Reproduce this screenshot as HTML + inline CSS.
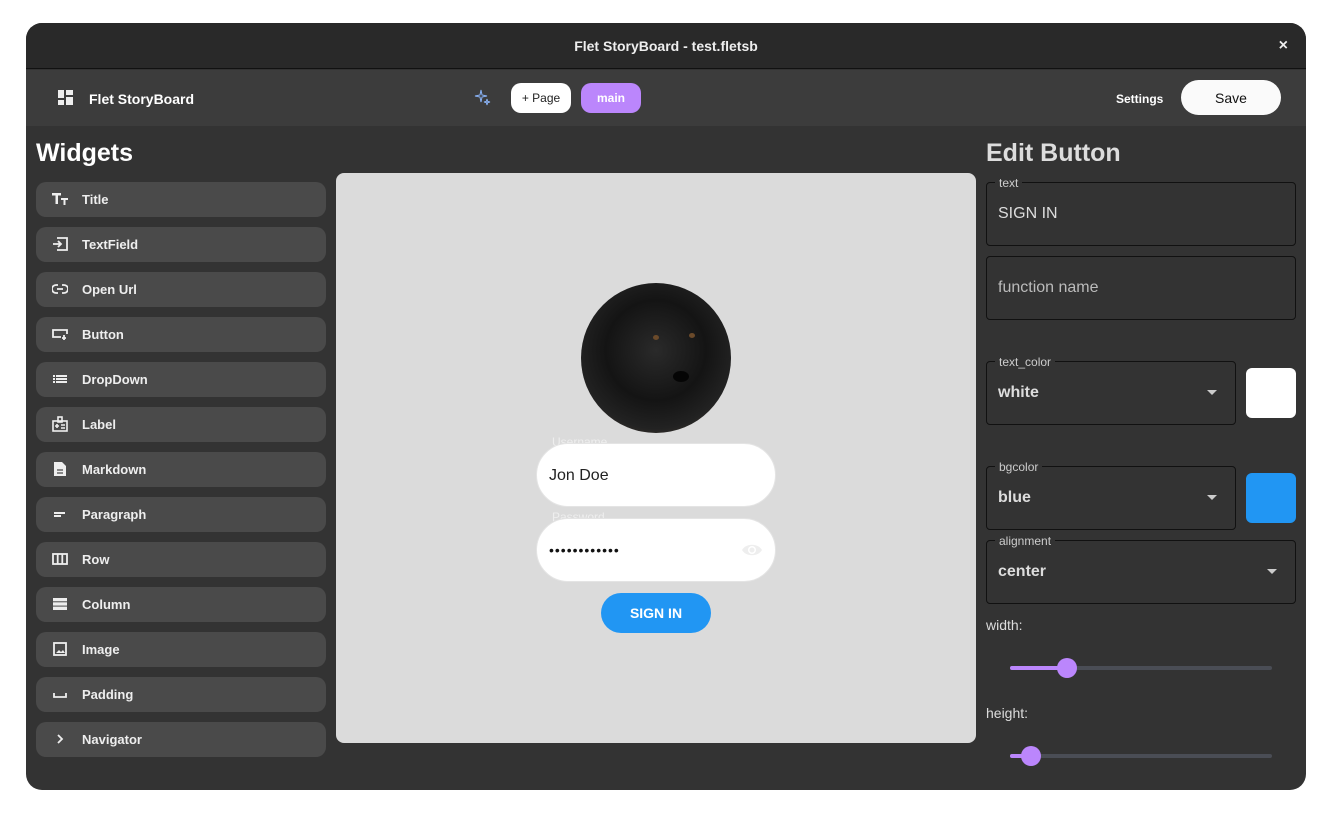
<!DOCTYPE html>
<html><head><style>
*{box-sizing:border-box;margin:0;padding:0}
body{width:1332px;height:819px;background:#fff;font-family:"Liberation Sans",sans-serif;position:relative;overflow:hidden}
.win{position:absolute;left:26px;top:23px;width:1280px;height:767px;background:#333;border-radius:16px;overflow:hidden}
.tb{position:absolute;left:0;top:0;width:100%;height:46px;background:#292929;border-bottom:1px solid #111;color:#eee;font-weight:bold;font-size:14px;text-align:center;line-height:46px}
.tool{position:absolute;left:0;top:47px;width:100%;height:56px;background:#3c3c3c}
.abs{position:absolute}
.item{position:absolute;left:10px;width:290px;height:35px;background:#4a4a4a;border-radius:10px;color:#eee;font-size:13px;font-weight:bold;line-height:35px;padding-left:46px}
.item svg{position:absolute;left:16px;top:10px}
.fld{position:absolute;left:960px;width:310px;border:1px solid #111;border-radius:4px;color:#ddd}
.lbl{position:absolute;top:-7px;left:8px;background:#333;padding:0 4px;font-size:12px;color:#ccc;line-height:14px}
.val{position:absolute;left:11px;font-size:16px}
.arr{position:absolute;width:0;height:0;border-left:5px solid transparent;border-right:5px solid transparent;border-top:5px solid #ccc}
</style></head><body>
<div class="win">
<div class="tb">Flet StoryBoard - test.fletsb<span style="position:absolute;right:18px;top:0;font-size:16px">×</span></div>
<div class="tool">
 <svg class="abs" style="left:32px;top:20px" width="15" height="15" viewBox="0 0 15 15" fill="#eee"><rect x="0" y="0" width="6" height="8"/><rect x="0" y="10" width="6" height="5"/><rect x="8" y="0" width="7" height="5"/><rect x="8" y="7" width="7" height="8"/></svg>
 <div class="abs" style="left:63px;top:21px;color:#fff;font-weight:bold;font-size:14px">Flet StoryBoard</div>
 <svg class="abs" style="left:448px;top:19px" width="18" height="18" viewBox="0 0 18 18" fill="none" stroke="#8ab4f8" stroke-width="1"><path d="M7 1 L8 6 L13 7 L8 8 L7 13 L6 8 L1 7 L6 6Z"/><path d="M13 10 L13.6 12.4 L16 13 L13.6 13.6 L13 16 L12.4 13.6 L10 13 L12.4 12.4Z"/></svg>
 <div class="abs" style="left:485px;top:13px;width:60px;height:30px;background:#fff;border-radius:10px;font-size:12px;color:#222;text-align:center;line-height:31px">+ Page</div>
 <div class="abs" style="left:555px;top:13px;width:60px;height:30px;background:#bb86fc;border-radius:10px;font-size:12px;color:#fff;font-weight:bold;text-align:center;line-height:31px">main</div>
 <div class="abs" style="left:1090px;top:22px;color:#fff;font-weight:bold;font-size:12px">Settings</div>
 <div class="abs" style="left:1155px;top:10px;width:100px;height:35px;background:#fafafa;border-radius:18px;font-size:14px;color:#111;text-align:center;line-height:36px">Save</div>
</div>
<div class="abs" style="left:10px;top:116px;color:#fff;font-weight:bold;font-size:25px">Widgets</div>
<div class="item" style="top:159px"><svg width="16" height="14" viewBox="0 0 16 14" fill="#eee"><path d="M0 1h9v2.5H6V12H3.5V3.5H0z M9 6h7v2h-2.5v5H11.5V8H9z"/></svg>Title</div>
<div class="item" style="top:204px"><svg width="16" height="14" viewBox="0 0 16 14" fill="none" stroke="#eee" stroke-width="1.8"><path d="M5 1H15V13H5M1 7h8M6 4l3 3-3 3"/></svg>TextField</div>
<div class="item" style="top:249px"><svg width="16" height="14" viewBox="0 0 16 14" fill="none" stroke="#eee" stroke-width="1.8"><path d="M6 3H4a4 4 0 000 8h2M10 3h2a4 4 0 010 8h-2M5 7h6"/></svg>Open Url</div>
<div class="item" style="top:294px"><svg width="16" height="14" viewBox="0 0 16 14" fill="none" stroke="#eee" stroke-width="1.8"><path d="M9 10H1V3h14v4M12 8v5M10 11h4"/></svg>Button</div>
<div class="item" style="top:339px"><svg width="16" height="14" viewBox="0 0 16 14" fill="#eee"><rect x="1" y="3" width="2" height="2"/><rect x="1" y="6" width="2" height="2"/><rect x="1" y="9" width="2" height="2"/><rect x="4" y="3" width="11" height="2"/><rect x="4" y="6" width="11" height="2"/><rect x="4" y="9" width="11" height="2"/></svg>DropDown</div>
<div class="item" style="top:384px"><svg width="16" height="16" viewBox="0 0 16 16" fill="none" stroke="#eee" stroke-width="1.6" style="top:9px"><rect x="1" y="5" width="14" height="10"/><rect x="6" y="1" width="4" height="5"/><path d="M3 10h4M5 8v4M9 9h4M9 12h4"/></svg>Label</div>
<div class="item" style="top:429px"><svg width="16" height="16" viewBox="0 0 16 16" fill="#eee" style="top:9px"><path d="M2 1h8l4 4v10H2z"/><path d="M5 9h6M5 12h6" stroke="#4a4a4a" stroke-width="1.3"/></svg>Markdown</div>
<div class="item" style="top:474px"><svg width="16" height="14" viewBox="0 0 16 14" fill="#eee"><rect x="2" y="5" width="11" height="2"/><rect x="2" y="8" width="7" height="2"/></svg>Paragraph</div>
<div class="item" style="top:519px"><svg width="16" height="14" viewBox="0 0 16 14" fill="none" stroke="#eee" stroke-width="1.8"><rect x="1" y="2" width="14" height="10"/><path d="M5.7 2v10M10.3 2v10"/></svg>Row</div>
<div class="item" style="top:564px"><svg width="16" height="14" viewBox="0 0 16 14" fill="#eee"><rect x="1" y="1" width="14" height="3.3"/><rect x="1" y="5.3" width="14" height="3.3"/><rect x="1" y="9.6" width="14" height="3.4"/></svg>Column</div>
<div class="item" style="top:609px"><svg width="16" height="14" viewBox="0 0 16 14" fill="none" stroke="#eee" stroke-width="1.8"><rect x="2" y="1" width="12" height="12"/><path d="M4 11l3-3 2 2 2-2 2 3z" fill="#eee" stroke="none"/></svg>Image</div>
<div class="item" style="top:654px"><svg width="16" height="14" viewBox="0 0 16 14" fill="none" stroke="#eee" stroke-width="1.8"><path d="M2 6v4h12V6"/></svg>Padding</div>
<div class="item" style="top:699px"><svg width="16" height="14" viewBox="0 0 16 14" fill="none" stroke="#eee" stroke-width="1.8"><path d="M6 3l4 4-4 4"/></svg>Navigator</div>

<div class="abs" style="left:310px;top:150px;width:640px;height:570px;background:#dbdbdb;border-radius:8px">
 <div class="abs" style="left:245px;top:110px;width:150px;height:150px;border-radius:50%;background:radial-gradient(circle at 50% 45%,#2a2a2a 0,#141414 45%,#222 70%,#5a4a3a 100%)">
  <div class="abs" style="left:72px;top:52px;width:6px;height:5px;background:#6b4a2a;border-radius:50%"></div>
  <div class="abs" style="left:108px;top:50px;width:6px;height:5px;background:#6b4a2a;border-radius:50%"></div>
  <div class="abs" style="left:92px;top:88px;width:16px;height:11px;background:#050505;border-radius:50%"></div>
 </div>
 <div class="abs" style="left:216px;top:262px;font-size:12px;color:#eee">Username</div>
 <div class="abs" style="left:216px;top:337px;font-size:12px;color:#eee">Password</div>
 <div class="abs" style="left:200px;top:270px;width:240px;height:64px;background:#fff;border-radius:32px;border:1px solid #e4e4e4;font-size:16px;color:#222;padding-left:12px;line-height:64px">Jon Doe</div>
 <div class="abs" style="left:200px;top:345px;width:240px;height:64px;background:#fff;border-radius:32px;border:1px solid #e4e4e4;font-size:14px;color:#111;padding-left:12px;line-height:62px;letter-spacing:1px">••••••••••••
  <svg class="abs" style="right:12px;top:22px" width="22" height="18" viewBox="0 0 22 18"><path d="M1 9C5 2 17 2 21 9C17 16 5 16 1 9Z" fill="#eee"/><circle cx="11" cy="9" r="4" fill="#fff"/><circle cx="11" cy="9" r="2.5" fill="#eee"/></svg></div>
 <div class="abs" style="left:265px;top:420px;width:110px;height:40px;background:#2196f3;border-radius:20px;color:#fff;font-weight:bold;font-size:14px;text-align:center;line-height:40px">SIGN IN</div>
</div>

<div class="abs" style="left:960px;top:116px;color:#ddd;font-weight:bold;font-size:25px">Edit Button</div>
<div class="fld" style="top:159px;height:64px"><div class="lbl">text</div><div class="val" style="top:22px">SIGN IN</div></div>
<div class="fld" style="top:233px;height:64px"><div class="val" style="top:22px;color:#bbb">function name</div></div>
<div class="fld" style="top:338px;height:64px;width:250px"><div class="lbl">text_color</div><div class="val" style="top:22px;font-weight:bold">white</div><div class="arr" style="left:220px;top:28px"></div></div>
<div class="abs" style="left:1220px;top:345px;width:50px;height:50px;background:#fff;border-radius:6px"></div>
<div class="fld" style="top:443px;height:64px;width:250px"><div class="lbl">bgcolor</div><div class="val" style="top:22px;font-weight:bold">blue</div><div class="arr" style="left:220px;top:28px"></div></div>
<div class="abs" style="left:1220px;top:450px;width:50px;height:50px;background:#2196f3;border-radius:6px"></div>
<div class="fld" style="top:517px;height:64px"><div class="lbl">alignment</div><div class="val" style="top:22px;font-weight:bold">center</div><div class="arr" style="left:280px;top:28px"></div></div>
<div class="abs" style="left:960px;top:594px;color:#ddd;font-size:14px">width:</div>
<div class="abs" style="left:984px;top:643px;width:262px;height:4px;background:#4a4d55;border-radius:2px"></div>
<div class="abs" style="left:984px;top:643px;width:58px;height:4px;background:#bb86fc;border-radius:2px"></div>
<div class="abs" style="left:1031px;top:635px;width:20px;height:20px;background:#bb86fc;border-radius:50%"></div>
<div class="abs" style="left:960px;top:682px;color:#ddd;font-size:14px">height:</div>
<div class="abs" style="left:984px;top:731px;width:262px;height:4px;background:#4a4d55;border-radius:2px"></div>
<div class="abs" style="left:984px;top:731px;width:20px;height:4px;background:#bb86fc;border-radius:2px"></div>
<div class="abs" style="left:995px;top:723px;width:20px;height:20px;background:#bb86fc;border-radius:50%"></div>
</div>
</body></html>
